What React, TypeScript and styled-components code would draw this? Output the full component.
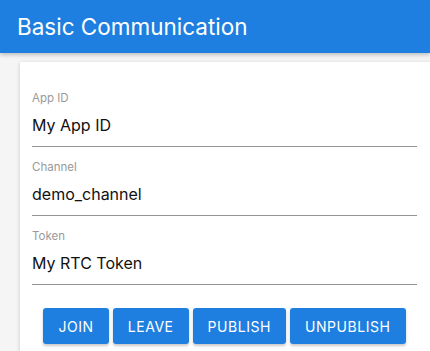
import React from 'react';
import styled, { createGlobalStyle } from 'styled-components';

const Global = createGlobalStyle`
  * { box-sizing: border-box; }
  html, body {
    margin: 0;
    padding: 0;
    background: #f5f5f5;
    overflow: hidden;
    font-family: Inter, 'Liberation Sans', sans-serif;
  }
`;

const Page = styled.div`
  width: 430px;
  height: 351px;
  overflow: hidden;
`;

const Header = styled.header`
  height: 53px;
  background: #1e7fe0;
  display: flex;
  align-items: center;
  padding-left: 17px;
  box-shadow: 0 2px 4px rgba(0, 0, 0, 0.22);
  position: relative;
  z-index: 1;
`;

const Title = styled.h1`
  margin: 0;
  color: #fff;
  font-size: 22.5px;
  font-weight: 400;
`;

const Card = styled.section`
  margin: 9px 0 0 20px;
  width: 440px;
  background: #fff;
  padding: 16px 0 20px 12px;
  box-shadow: 0 1px 4px rgba(0, 0, 0, 0.18);
`;

const Form = styled.div`
  width: 385px;
  display: flex;
  flex-direction: column;
`;

const Field = styled.label`
  display: flex;
  flex-direction: column;
  padding-top: 12px;
  border-bottom: 1px solid #949494;
`;

const Label = styled.span`
  font-size: 11.5px;
  line-height: 16px;
  color: #9a9a9a;
`;

const Input = styled.input`
  border: none;
  outline: none;
  padding: 0 0 3px;
  height: 40px;
  font-family: inherit;
  font-size: 16px;
  color: #111;
  background: transparent;
`;

const Buttons = styled.div`
  display: flex;
  justify-content: center;
  gap: 4px;
  margin-top: 23px;
`;

const Button = styled.button`
  height: 36px;
  padding: 0 15px;
  border: none;
  border-radius: 3px;
  background: #1e7fe0;
  color: #fff;
  font-family: inherit;
  font-size: 14px;
  letter-spacing: 0.55px;
  text-transform: uppercase;
  box-shadow: 0 2px 3px rgba(0, 0, 0, 0.22);
`;

const fields = [
  { label: 'App ID', value: 'My App ID' },
  { label: 'Channel', value: 'demo_channel' },
  { label: 'Token', value: 'My RTC Token' },
];

export default function App() {
  return (
    <Page>
      <Global />
      <Header>
        <Title>Basic Communication</Title>
      </Header>
      <Card>
        <Form>
          {fields.map((f) => (
            <Field key={f.label}>
              <Label>{f.label}</Label>
              <Input defaultValue={f.value} />
            </Field>
          ))}
          <Buttons>
            <Button>Join</Button>
            <Button>Leave</Button>
            <Button>Publish</Button>
            <Button>Unpublish</Button>
          </Buttons>
        </Form>
      </Card>
    </Page>
  );
}
